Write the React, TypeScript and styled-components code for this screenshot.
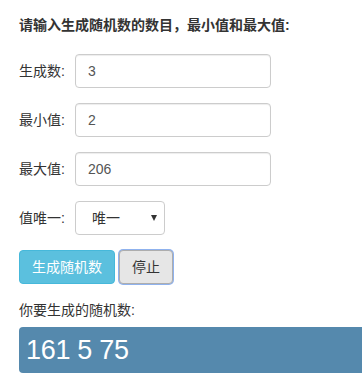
import React from "react";
import styled, { createGlobalStyle } from "styled-components";

const Global = createGlobalStyle`
  html, body { margin: 0; padding: 0; overflow: hidden; background: #fff; }
  body {
    font-family: "Liberation Sans", "Noto Sans CJK SC", sans-serif;
    font-size: 14px;
    line-height: 20px;
    color: #333;
  }
`;

const Page = styled.div`
  padding: 15px 0 0 19px;
  overflow: hidden;
`;

const Title = styled.div`
  font-weight: bold;
  height: 20px;
  margin-bottom: 19px;
`;

const Row = styled.div`
  display: flex;
  align-items: center;
  height: 34px;
  margin-bottom: 15px;
`;

const Label = styled.label`
  width: 56px;
  flex: none;
`;

const Input = styled.input`
  box-sizing: border-box;
  width: 196px;
  height: 34px;
  padding: 6px 12px;
  border: 1px solid #ccc;
  border-radius: 4px;
  font: inherit;
  color: #555;
  box-shadow: inset 0 1px 1px rgba(0, 0, 0, 0.075);
  outline: none;
`;

const SelectWrap = styled.div`
  position: relative;
  width: 90px;
  height: 34px;
`;

const Select = styled.select`
  box-sizing: border-box;
  appearance: none;
  -webkit-appearance: none;
  width: 100%;
  height: 100%;
  padding: 6px 12px 6px 16px;
  border: 1px solid #ccc;
  border-radius: 4px;
  background: #fff;
  font: inherit;
  color: #333;
  outline: none;
`;

const Arrow = styled.span`
  position: absolute;
  right: 8px;
  top: 14px;
  width: 0;
  height: 0;
  border-left: 3.5px solid transparent;
  border-right: 3.5px solid transparent;
  border-top: 6px solid #333;
  pointer-events: none;
`;

const Buttons = styled.div`
  display: flex;
  gap: 3px;
  height: 34px;
  margin-bottom: 16px;
`;

const Button = styled.button<{ $variant: "info" | "stop" }>`
  box-sizing: border-box;
  height: 34px;
  padding: 6px 12px;
  border-radius: 4px;
  font: inherit;
  cursor: pointer;
  ${(p) =>
    p.$variant === "info"
      ? `background: #5bc0de; border: 1px solid #46b8da; color: #fff;`
      : `background: #e6e6e6; border: 1px solid #adadad; color: #333;
         box-shadow: 0 0 0 1px #8fb2ee; margin-left: 1px;`}
`;

const Caption = styled.div`
  height: 20px;
  margin-bottom: 7px;
`;

const ResultClip = styled.div`
  overflow: hidden;
  height: 46px;
`;

const Result = styled.div`
  box-sizing: border-box;
  width: 400px;
  height: 46px;
  background: #5589ad;
  border-radius: 4px;
  color: #fff;
  font-size: 27px;
  line-height: 46px;
  padding-left: 7px;
  letter-spacing: -0.3px;
`;

export default function App() {
  return (
    <>
      <Global />
      <Page>
        <Title>请输入生成随机数的数目，最小值和最大值:</Title>
        <Row>
          <Label>生成数:</Label>
          <Input defaultValue="3" />
        </Row>
        <Row>
          <Label>最小值:</Label>
          <Input defaultValue="2" />
        </Row>
        <Row>
          <Label>最大值:</Label>
          <Input defaultValue="206" />
        </Row>
        <Row>
          <Label>值唯一:</Label>
          <SelectWrap>
            <Select defaultValue="1">
              <option value="1">唯一</option>
              <option value="0">不唯一</option>
            </Select>
            <Arrow />
          </SelectWrap>
        </Row>
        <Buttons>
          <Button $variant="info">生成随机数</Button>
          <Button $variant="stop">停止</Button>
        </Buttons>
        <Caption>你要生成的随机数:</Caption>
        <ResultClip>
          <Result>161 5 75</Result>
        </ResultClip>
      </Page>
    </>
  );
}
